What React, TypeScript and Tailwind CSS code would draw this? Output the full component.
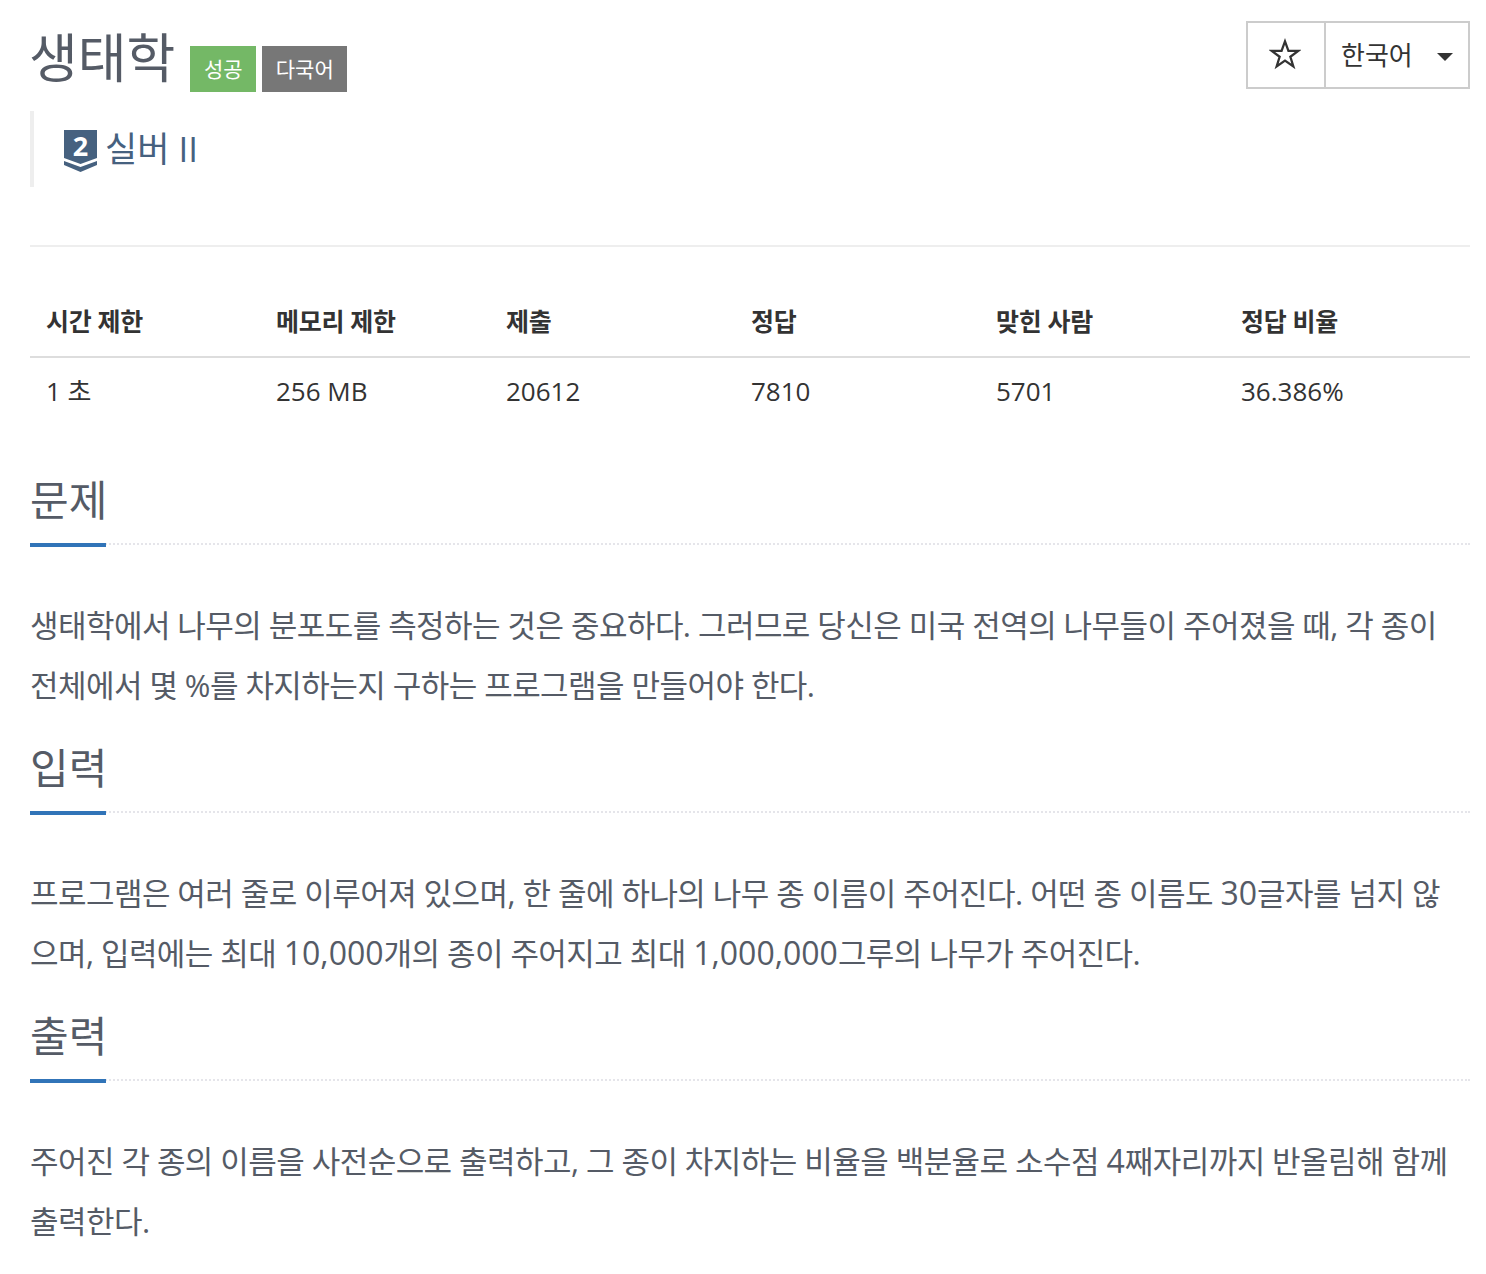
const fontStack = { fontFamily: '"Open Sans", "Noto Sans CJK KR", sans-serif' };

const columns = [
  { label: "시간 제한", value: "1 초", width: "w-[230px]" },
  { label: "메모리 제한", value: "256 MB", width: "w-[230px]" },
  { label: "제출", value: "20612", width: "w-[245px]" },
  { label: "정답", value: "7810", width: "w-[245px]" },
  { label: "맞힌 사람", value: "5701", width: "w-[245px]" },
  { label: "정답 비율", value: "36.386%", width: "w-[228px]" },
];

// numbers sit a little larger than the hangul around them
function Line({ text }: { text: string }) {
  return (
    <p className="whitespace-nowrap">
      {text.split(/(\d[\d,]*)/).map((part, i) =>
        i % 2 === 1 ? (
          <span key={i} className="text-[32px] tracking-normal">{part}</span>
        ) : (
          part
        )
      )}
    </p>
  );
}

function Section({ title, lines }: { title: string; lines: string[] }) {
  return (
    <section>
      <div className="relative h-[88px] border-b-2 border-dotted border-[#e5e5ea]">
        <h2 className="text-[42px] leading-[60px] pt-[13px] text-[#555b66]">{title}</h2>
        <div className="absolute left-0 -bottom-[4px] w-[76px] h-[4px] bg-[#3174b8]" />
      </div>
      <div className="pt-[50px] pb-[10px] text-[31px] leading-[60px] text-[#555b66] tracking-[-0.55px]">
        {lines.map((line) => (
          <Line key={line} text={line} />
        ))}
      </div>
    </section>
  );
}

export default function App() {
  return (
    <div style={fontStack} className="w-[1486px] h-[1274px] overflow-hidden bg-white pl-[30px] pr-[16px] pt-[20px]">
      <header className="flex justify-between items-start h-[91px]">
        <div className="flex items-end h-[72px]">
          <h1 className="-ml-[1px] text-[53px] leading-[68px] text-[#555b66]">생태학</h1>
          <span className="ml-[15px] h-[46px] w-[66px] pt-[2px] flex items-center justify-center bg-[#74b866] text-white text-[21px]">성공</span>
          <span className="ml-[6px] h-[46px] w-[85px] pt-[2px] flex items-center justify-center bg-[#777777] text-white text-[21px]">다국어</span>
        </div>
        <div className="flex h-[68px] mt-[1px] border-2 border-[#cccccc] text-[#333333]">
          <div className="w-[78px] flex items-center justify-center border-r-2 border-[#cccccc] pb-[3px] pr-[3px]">
            <svg width="32" height="32" viewBox="0 0 28 28" fill="none" stroke="#333333" strokeWidth="2">
              <path d="M14 3l3 8.2h8.6l-6.9 5.2 2.6 8.4L14 19.8l-7.3 5 2.6-8.4-6.9-5.2H11z" />
            </svg>
          </div>
          <div className="w-[142px] flex items-center pl-[15px] text-[26px]">
            한국어
            <span className="ml-[24px] mt-[3px] border-x-[8px] border-x-transparent border-t-[8px] border-t-[#333333]" />
          </div>
        </div>
      </header>

      <div className="flex items-center h-[76px] border-l-[4px] border-[#eeeeee] pl-[30px] text-[#46617f] text-[35px]">
        <div className="relative w-[33px] h-[42px] mt-[4px]">
          <svg width="33" height="42" viewBox="0 0 33 42">
            <path d="M0 0h33v28L16.5 34 0 28z" fill="#46617f" />
            <path d="M0 31l16.5 6 16.5-6v4l-16.5 7L0 35z" fill="#46617f" />
          </svg>
          <span className="absolute left-0 right-0 top-[-2px] text-center text-[27px] leading-[36px] font-bold text-white">2</span>
        </div>
        <span className="ml-[8px]">실버 II</span>
      </div>

      <div className="mt-[58px] border-t-2 border-[#eeeeee]" />

      <div className="mt-[40px] mb-[29px]">
        <div className="flex h-[71px] items-center border-b-2 border-[#dddddd] font-bold text-[25px] tracking-[-0.3px] text-[#333333]">
          {columns.map((col) => (
            <div key={col.label} className={`${col.width} shrink-0 pl-[16px] whitespace-nowrap`}>{col.label}</div>
          ))}
        </div>
        <div className="flex h-[70px] items-center text-[26px] text-[#333333] pb-[3px]">
          {columns.map((col) => (
            <div key={col.label} className={`${col.width} shrink-0 pl-[16px] whitespace-nowrap`}>{col.value}</div>
          ))}
        </div>
      </div>

      <Section
        title="문제"
        lines={[
          "생태학에서 나무의 분포도를 측정하는 것은 중요하다. 그러므로 당신은 미국 전역의 나무들이 주어졌을 때, 각 종이",
          "전체에서 몇 %를 차지하는지 구하는 프로그램을 만들어야 한다.",
        ]}
      />
      <Section
        title="입력"
        lines={[
          "프로그램은 여러 줄로 이루어져 있으며, 한 줄에 하나의 나무 종 이름이 주어진다. 어떤 종 이름도 30글자를 넘지 않",
          "으며, 입력에는 최대 10,000개의 종이 주어지고 최대 1,000,000그루의 나무가 주어진다.",
        ]}
      />
      <Section
        title="출력"
        lines={[
          "주어진 각 종의 이름을 사전순으로 출력하고, 그 종이 차지하는 비율을 백분율로 소수점 4째자리까지 반올림해 함께",
          "출력한다.",
        ]}
      />
    </div>
  );
}
